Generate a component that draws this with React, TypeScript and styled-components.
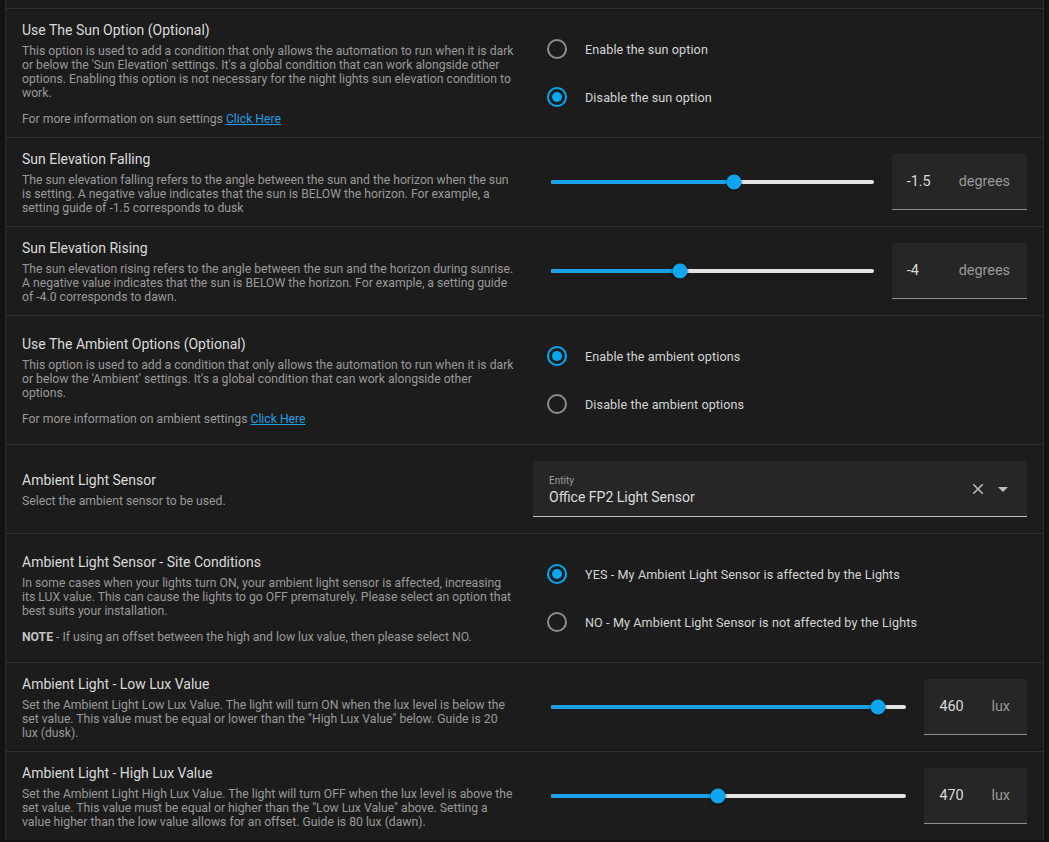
import React from 'react';
import styled, { createGlobalStyle } from 'styled-components';

const GlobalStyle = createGlobalStyle`
  html, body {
    margin: 0;
    padding: 0;
    background: #121212;
  }
  body {
    font-family: Roboto, "Noto Sans", "Liberation Sans", sans-serif;
    -webkit-font-smoothing: antialiased;
  }
`;

const Page = styled.div`
  width: 1049px;
  height: 842px;
  overflow: hidden;
  padding: 0 5px;
  box-sizing: border-box;
`;

const Card = styled.div`
  background: #1c1c1c;
  border-left: 1px solid #2b2b2b;
  border-right: 1px solid #2b2b2b;
`;

const Tail = styled.div`
  height: 8px;
`;

const Row = styled.div`
  display: grid;
  grid-template-columns: 498px 1fr;
  column-gap: 13px;
  align-items: center;
  padding: 11px 16px;
  border-top: 1px solid #2f2f2f;
`;

const Info = styled.div`
  display: flex;
  flex-direction: column;
`;

const Title = styled.div`
  font-size: 14px;
  line-height: 20px;
  color: #dadada;
  margin-bottom: 4px;
`;

const Desc = styled.div`
  font-size: 12.2px;
  line-height: 14px;
  color: #999999;
  white-space: nowrap;
  & + & {
    margin-top: 12px;
  }
  b {
    color: #c4c4c4;
    font-weight: 700;
  }
`;

const Link = styled.a`
  color: #1e9fe6;
  text-decoration: underline;
  cursor: pointer;
`;

const Control = styled.div`
  min-height: 66px;
  display: flex;
  flex-direction: column;
  justify-content: center;
`;

const RadioGroup = styled.div`
  display: flex;
  flex-direction: column;
  padding: 5px 0;
`;

const RadioItem = styled.label`
  display: flex;
  align-items: center;
  height: 48px;
  padding-left: 14px;
  gap: 18px;
  font-size: 12.6px;
  color: #d4d4d4;
  letter-spacing: 0.1px;
  cursor: pointer;
`;

const RadioCircle = styled.span<{ $checked?: boolean }>`
  width: 20px;
  height: 20px;
  box-sizing: border-box;
  border-radius: 50%;
  border: 2px solid ${(p) => (p.$checked ? '#03a9f4' : '#8d8d8d')};
  display: flex;
  align-items: center;
  justify-content: center;
  flex-shrink: 0;
  &::after {
    content: '';
    width: 10px;
    height: 10px;
    border-radius: 50%;
    background: #03a9f4;
    display: ${(p) => (p.$checked ? 'block' : 'none')};
  }
`;

const SliderLine = styled.div`
  display: flex;
  align-items: center;
`;

const SliderBox = styled.div`
  flex: 1;
  padding: 0 18px;
  height: 40px;
  display: flex;
  align-items: center;
`;

const Track = styled.div`
  position: relative;
  flex: 1;
  height: 4px;
  border-radius: 2px;
  background: #e4e4e4;
`;

const Active = styled.div`
  position: absolute;
  left: 0;
  top: 0;
  bottom: 0;
  border-radius: 2px;
  background: #1aa0e6;
`;

const Thumb = styled.div`
  position: absolute;
  top: 50%;
  width: 15px;
  height: 15px;
  border-radius: 50%;
  background: #0ea5f0;
  transform: translate(-50%, -50%);
  box-shadow: 0 1px 3px rgba(0, 0, 0, 0.6);
`;

const NumberField = styled.div`
  display: flex;
  align-items: center;
  height: 56px;
  padding: 0 17px 0 15px;
  box-sizing: border-box;
  background: #262626;
  border-radius: 4px 4px 0 0;
  border-bottom: 1px solid #8e8e8e;
  font-size: 14.4px;
`;

const NumberValue = styled.span`
  width: 52px;
  color: #dadada;
`;

const Unit = styled.span`
  color: #999999;
`;

const EntityField = styled.div`
  display: flex;
  align-items: center;
  height: 56px;
  padding: 0 12px 0 16px;
  box-sizing: border-box;
  background: #262626;
  border-radius: 4px 4px 0 0;
  border-bottom: 1px solid #bdbdbd;
`;

const EntityText = styled.div`
  flex: 1;
  display: flex;
  flex-direction: column;
  padding-top: 2px;
`;

const EntityLabel = styled.span`
  font-size: 10px;
  line-height: 14px;
  color: #9a9a9a;
`;

const EntityValue = styled.span`
  font-size: 14px;
  line-height: 18px;
  color: #dcdcdc;
`;

const Icons = styled.div`
  display: flex;
  align-items: center;
  gap: 4px;
  color: #bdbdbd;
`;

type RadioOpt = { label: string; checked?: boolean };

const Radios = ({ options }: { options: RadioOpt[] }) => (
  <RadioGroup>
    {options.map((o) => (
      <RadioItem key={o.label}>
        <RadioCircle $checked={o.checked} />
        {o.label}
      </RadioItem>
    ))}
  </RadioGroup>
);

// description text broken where the original editor wraps it
const Lines = ({ lines }: { lines: string[] }) => (
  <Desc>
    {lines.map((l, i) => (
      <React.Fragment key={i}>
        {i > 0 && <br />}
        {l}
      </React.Fragment>
    ))}
  </Desc>
);

const Slider = ({ value, min, max, unit }: { value: number; min: number; max: number; unit: string }) => {
  const pct = ((value - min) / (max - min)) * 100;
  return (
    <SliderLine>
      <SliderBox>
        <Track>
          <Active style={{ width: `${pct}%` }} />
          <Thumb style={{ left: `${pct}%` }} />
        </Track>
      </SliderBox>
      <NumberField>
        <NumberValue>{value}</NumberValue>
        <Unit>{unit}</Unit>
      </NumberField>
    </SliderLine>
  );
};

const App = () => (
  <>
    <GlobalStyle />
    <Page>
      <Card>
        <Tail />

        <Row>
          <Info>
            <Title>Use The Sun Option (Optional)</Title>
            <Lines
              lines={[
                'This option is used to add a condition that only allows the automation to run when it is dark',
                "or below the 'Sun Elevation' settings. It's a global condition that can work alongside other",
                'options. Enabling this option is not necessary for the night lights sun elevation condition to',
                'work.',
              ]}
            />
            <Desc>
              For more information on sun settings <Link>Click Here</Link>
            </Desc>
          </Info>
          <Control>
            <Radios options={[{ label: 'Enable the sun option' }, { label: 'Disable the sun option', checked: true }]} />
          </Control>
        </Row>

        <Row>
          <Info>
            <Title>Sun Elevation Falling</Title>
            <Lines
              lines={[
                'The sun elevation falling refers to the angle between the sun and the horizon when the sun',
                'is setting. A negative value indicates that the sun is BELOW the horizon. For example, a',
                'setting guide of -1.5 corresponds to dusk',
              ]}
            />
          </Info>
          <Control>
            <Slider value={-1.5} min={-10} max={5} unit="degrees" />
          </Control>
        </Row>

        <Row>
          <Info>
            <Title>Sun Elevation Rising</Title>
            <Lines
              lines={[
                'The sun elevation rising refers to the angle between the sun and the horizon during sunrise.',
                'A negative value indicates that the sun is BELOW the horizon. For example, a setting guide',
                'of -4.0 corresponds to dawn.',
              ]}
            />
          </Info>
          <Control>
            <Slider value={-4} min={-10} max={5} unit="degrees" />
          </Control>
        </Row>

        <Row>
          <Info>
            <Title>Use The Ambient Options (Optional)</Title>
            <Lines
              lines={[
                'This option is used to add a condition that only allows the automation to run when it is dark',
                "or below the 'Ambient' settings. It's a global condition that can work alongside other",
                'options.',
              ]}
            />
            <Desc>
              For more information on ambient settings <Link>Click Here</Link>
            </Desc>
          </Info>
          <Control>
            <Radios
              options={[{ label: 'Enable the ambient options', checked: true }, { label: 'Disable the ambient options' }]}
            />
          </Control>
        </Row>

        <Row>
          <Info>
            <Title>Ambient Light Sensor</Title>
            <Desc>Select the ambient sensor to be used.</Desc>
          </Info>
          <Control>
            <EntityField>
              <EntityText>
                <EntityLabel>Entity</EntityLabel>
                <EntityValue>Office FP2 Light Sensor</EntityValue>
              </EntityText>
              <Icons>
                <svg width="18" height="18" viewBox="0 0 24 24" fill="currentColor">
                  <path d="M19 6.41L17.59 5 12 10.59 6.41 5 5 6.41 10.59 12 5 17.59 6.41 19 12 13.41 17.59 19 19 17.59 13.41 12z" />
                </svg>
                <svg width="24" height="24" viewBox="0 0 24 24" fill="currentColor">
                  <path d="M7 10l5 5 5-5z" />
                </svg>
              </Icons>
            </EntityField>
          </Control>
        </Row>

        <Row>
          <Info>
            <Title>Ambient Light Sensor - Site Conditions</Title>
            <Lines
              lines={[
                'In some cases when your lights turn ON, your ambient light sensor is affected, increasing',
                'its LUX value. This can cause the lights to go OFF prematurely. Please select an option that',
                'best suits your installation.',
              ]}
            />
            <Desc>
              <b>NOTE</b> - If using an offset between the high and low lux value, then please select NO.
            </Desc>
          </Info>
          <Control>
            <Radios
              options={[
                { label: 'YES - My Ambient Light Sensor is affected by the Lights', checked: true },
                { label: 'NO - My Ambient Light Sensor is not affected by the Lights' },
              ]}
            />
          </Control>
        </Row>

        <Row>
          <Info>
            <Title>Ambient Light - Low Lux Value</Title>
            <Lines
              lines={[
                'Set the Ambient Light Low Lux Value. The light will turn ON when the lux level is below the',
                'set value. This value must be equal or lower than the "High Lux Value" below. Guide is 20',
                'lux (dusk).',
              ]}
            />
          </Info>
          <Control>
            <Slider value={460} min={0} max={500} unit="lux" />
          </Control>
        </Row>

        <Row>
          <Info>
            <Title>Ambient Light - High Lux Value</Title>
            <Lines
              lines={[
                'Set the Ambient Light High Lux Value. The light will turn OFF when the lux level is above the',
                'set value. This value must be equal or higher than the "Low Lux Value" above. Setting a',
                'value higher than the low value allows for an offset. Guide is 80 lux (dawn).',
              ]}
            />
          </Info>
          <Control>
            <Slider value={470} min={0} max={1000} unit="lux" />
          </Control>
        </Row>
      </Card>
    </Page>
  </>
);

export default App;
